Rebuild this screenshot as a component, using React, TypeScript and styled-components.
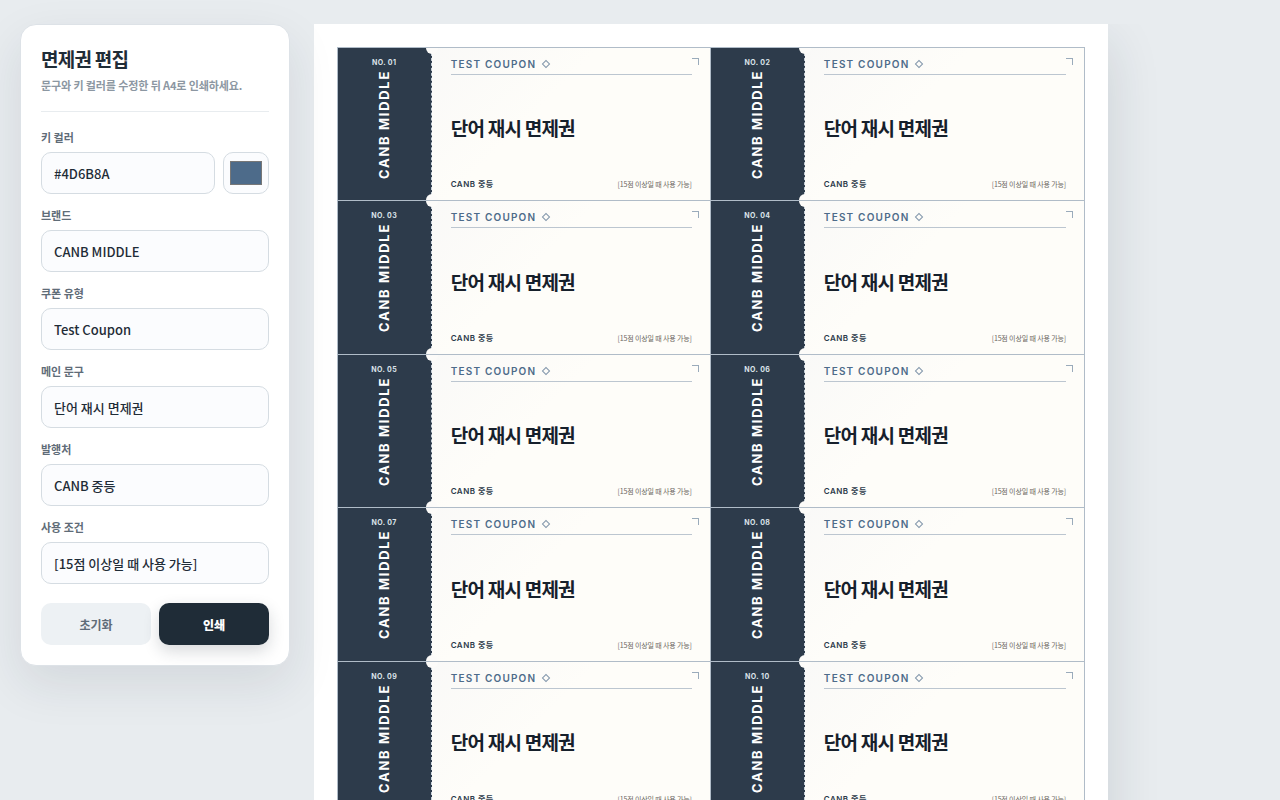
import React, { useState } from "react";
import styled, { createGlobalStyle } from "styled-components";

const GlobalStyle = createGlobalStyle`
  *, *::before, *::after { box-sizing: border-box; }
  body {
    margin: 0;
    background: #e8ecef;
    color: #1f2c37;
    font-family: "Noto Sans CJK KR", sans-serif;
  }
  input, button { font: inherit; }
`;

const Page = styled.div`
  display: flex;
  align-items: flex-start;
  gap: 24px;
  min-height: 100vh;
  padding: 24px 20px;
`;

const Panel = styled.form`
  position: sticky;
  top: 24px;
  flex: 0 0 270px;
  padding: 20px;
  background: #ffffff;
  border: 1px solid #dde2e7;
  border-radius: 16px;
  box-shadow: 0 18px 48px rgba(31, 44, 55, 0.1);
`;

const PanelHeader = styled.header`
  margin-bottom: 17px;
  padding-bottom: 17px;
  border-bottom: 1px solid #e8ecef;
`;

const Title = styled.h1`
  margin: 0;
  font-size: 19px;
  line-height: 28px;
  font-weight: 700;
  letter-spacing: -0.04em;
`;

const Subtitle = styled.p`
  margin: 3px 0 0;
  font-size: 11px;
  line-height: 18px;
  font-weight: 600;
  letter-spacing: -0.01em;
  color: #8c97a2;
`;

const Fields = styled.div`
  display: grid;
  gap: 13px;
`;

const Field = styled.div`
  display: grid;
  gap: 7px;
`;

const Label = styled.label`
  font-size: 11px;
  line-height: 16px;
  font-weight: 700;
  color: #5f6c78;
`;

const ColorRow = styled.div`
  display: grid;
  grid-template-columns: 1fr 46px;
  gap: 8px;
`;

const TextInput = styled.input`
  width: 100%;
  min-width: 0;
  height: 42px;
  padding: 0 12px;
  border: 1px solid #d5dce2;
  border-radius: 10px;
  background: #fbfcfe;
  color: #1f2c37;
  font-size: 13px;
  font-weight: 500;
`;

const ColorInput = styled.input`
  width: 100%;
  height: 42px;
  padding: 4px;
  border: 1px solid #d5dce2;
  border-radius: 10px;
  background: #fbfcfe;
`;

const Actions = styled.div`
  display: grid;
  grid-template-columns: 1fr 1fr;
  gap: 8px;
  margin-top: 19px;
`;

const Button = styled.button<{ $primary?: boolean }>`
  height: 42px;
  border: 0;
  border-radius: 10px;
  font-size: 12px;
  font-weight: ${(p) => (p.$primary ? 900 : 700)};
  color: ${(p) => (p.$primary ? "#ffffff" : "#5f6c78")};
  background: ${(p) => (p.$primary ? "#1f2c37" : "#edf1f4")};
  box-shadow: ${(p) => (p.$primary ? "0 6px 16px rgba(31, 44, 55, 0.18)" : "none")};
`;

const Preview = styled.main`
  flex: 1;
  min-width: 0;
  overflow: hidden;
`;

const Sheet = styled.section`
  width: 210mm;
  height: 297mm;
  padding: 6mm;
  background: #ffffff;
  box-shadow: 0 20px 50px rgba(31, 44, 55, 0.14);
`;

const CouponGrid = styled.div`
  display: grid;
  grid-template-columns: repeat(2, 1fr);
  grid-template-rows: repeat(7, 1fr);
  height: 100%;
  border: 1px solid #b0bcc8;
`;

const CouponCard = styled.article`
  position: relative;
  display: grid;
  grid-template-columns: 94px 1fr;
  min-height: 0;
  overflow: hidden;
  border-right: 1px solid #b0bcc8;
  border-bottom: 1px solid #b0bcc8;
  background: linear-gradient(135deg, #f7f7f7, #fefdf9 50%);

  &:nth-child(2n) { border-right: 0; }
  &:nth-last-child(-n + 2) { border-bottom: 0; }
`;

const Stub = styled.div<{ $color: string }>`
  display: flex;
  flex-direction: column;
  align-items: center;
  gap: 2px;
  padding-top: 10px;
  border-right: 1px dashed #c9d2da;
  background: ${(p) => p.$color};
  color: #ffffff;
  font-family: Inter, "Noto Sans CJK KR", sans-serif;
`;

const Serial = styled.span`
  font-size: 7px;
  line-height: 10px;
  font-weight: 700;
  letter-spacing: 0.06em;
  color: #dce3ea;
`;

const Brand = styled.span`
  writing-mode: vertical-rl;
  transform: rotate(180deg);
  font-size: 13px;
  line-height: 16px;
  font-weight: 700;
  letter-spacing: 0.13em;
  white-space: nowrap;
`;

const Notch = styled.i<{ $bottom?: boolean }>`
  position: absolute;
  left: 94px;
  ${(p) => (p.$bottom ? "bottom" : "top")}: -6px;
  width: 12px;
  height: 12px;
  margin-left: -6px;
  border-radius: 50%;
  background: #fcfbf9;
`;

const Body = styled.div`
  display: flex;
  flex-direction: column;
  justify-content: space-between;
  padding: 8px 18px 10px 19px;
  font-family: Inter, "Noto Sans CJK KR", sans-serif;
`;

const CouponHead = styled.div<{ $color: string }>`
  display: flex;
  align-items: center;
  gap: 7px;
  padding-bottom: 2px;
  border-bottom: 1px solid #bcc6d0;
  color: ${(p) => p.$color};
  font-size: 10px;
  line-height: 16px;
  font-weight: 600;
  letter-spacing: 0.12em;
  text-transform: uppercase;
`;

const Diamond = styled.i`
  width: 6px;
  height: 6px;
  border: 1px solid currentColor;
  opacity: 0.7;
  transform: rotate(45deg);
`;

const Corner = styled.i`
  position: absolute;
  top: 10px;
  right: 11px;
  width: 7px;
  height: 7px;
  border: solid #9aabbb;
  border-width: 1px 1px 0 0;
`;

const Headline = styled.h2`
  margin: 3px 0 0;
  color: #16202b;
  font-family: "Noto Sans CJK KR", sans-serif;
  font-size: 19px;
  line-height: 28px;
  font-weight: 700;
  letter-spacing: -0.04em;
`;

const CouponFoot = styled.div`
  display: flex;
  align-items: center;
  justify-content: space-between;
  line-height: 12px;
`;

const Issuer = styled.span`
  color: #2c3a4a;
  font-size: 8px;
  font-weight: 600;
  letter-spacing: 0.06em;
`;

const Terms = styled.span`
  color: #6b6660;
  font-family: "Noto Sans CJK KR", sans-serif;
  font-size: 7px;
  letter-spacing: -0.02em;
`;

const initial = {
  color: "#4D6B8A",
  brand: "CANB MIDDLE",
  type: "Test Coupon",
  headline: "단어 재시 면제권",
  issuer: "CANB 중등",
  terms: "[15점 이상일 때 사용 가능]",
};

type Values = typeof initial;

const textFields: { key: keyof Values; label: string }[] = [
  { key: "brand", label: "브랜드" },
  { key: "type", label: "쿠폰 유형" },
  { key: "headline", label: "메인 문구" },
  { key: "issuer", label: "발행처" },
  { key: "terms", label: "사용 조건" },
];

// Darkens the key colour for the stub background.
function stubColor(hex: string) {
  if (!/^#[0-9a-f]{6}$/i.test(hex)) return "#2d3b4b";
  const mix = [31, 38, 47];
  const ch = [1, 3, 5].map((i, n) =>
    Math.round(parseInt(hex.slice(i, i + 2), 16) * 0.31 + mix[n] * 0.69)
  );
  return `rgb(${ch.join(",")})`;
}

function Coupon({ index, values }: { index: number; values: Values }) {
  return (
    <CouponCard>
      <Stub $color={stubColor(values.color)}>
        <Serial>NO. {String(index).padStart(2, "0")}</Serial>
        <Brand>{values.brand}</Brand>
      </Stub>
      <Body>
        <CouponHead $color={values.color}>
          {values.type}
          <Diamond />
        </CouponHead>
        <Headline>{values.headline}</Headline>
        <CouponFoot>
          <Issuer>{values.issuer}</Issuer>
          <Terms>{values.terms}</Terms>
        </CouponFoot>
      </Body>
      <Corner />
      <Notch />
      <Notch $bottom />
    </CouponCard>
  );
}

export default function App() {
  const [values, setValues] = useState<Values>(initial);
  const set = (key: keyof Values) => (e: React.ChangeEvent<HTMLInputElement>) =>
    setValues({ ...values, [key]: e.target.value });

  return (
    <Page>
      <GlobalStyle />
      <Panel onSubmit={(e) => e.preventDefault()}>
        <PanelHeader>
          <Title>면제권 편집</Title>
          <Subtitle>문구와 키 컬러를 수정한 뒤 A4로 인쇄하세요.</Subtitle>
        </PanelHeader>
        <Fields>
          <Field>
            <Label htmlFor="color">키 컬러</Label>
            <ColorRow>
              <TextInput id="color" value={values.color} onChange={set("color")} />
              <ColorInput
                type="color"
                aria-label="키 컬러"
                value={values.color.toLowerCase()}
                onChange={set("color")}
              />
            </ColorRow>
          </Field>
          {textFields.map(({ key, label }) => (
            <Field key={key}>
              <Label htmlFor={key}>{label}</Label>
              <TextInput id={key} value={values[key]} onChange={set(key)} />
            </Field>
          ))}
        </Fields>
        <Actions>
          <Button type="button" onClick={() => setValues(initial)}>초기화</Button>
          <Button type="button" $primary onClick={() => window.print()}>인쇄</Button>
        </Actions>
      </Panel>
      <Preview>
        <Sheet>
          <CouponGrid>
            {Array.from({ length: 14 }, (_, i) => (
              <Coupon key={i} index={i + 1} values={values} />
            ))}
          </CouponGrid>
        </Sheet>
      </Preview>
    </Page>
  );
}
